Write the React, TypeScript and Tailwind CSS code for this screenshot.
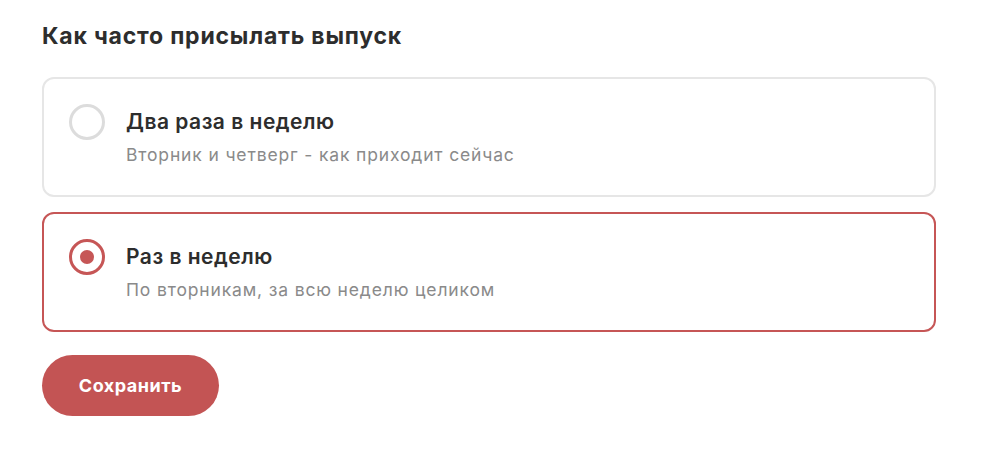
import { useState } from "react"

const options = [
    { id: "twice", title: "Два раза в неделю", note: "Вторник и четверг - как приходит сейчас" },
    { id: "once", title: "Раз в неделю", note: "По вторникам, за всю неделю целиком" },
]

export default function App() {
    const [value, setValue] = useState("once")

    return (
        <div className="min-h-screen bg-white pl-[42px] pt-[22px] font-['Inter',sans-serif] text-[#2d2d2d]">
            <h2 className="text-[23px] font-bold leading-[28px] tracking-[0.8px]">Как часто присылать выпуск</h2>

            <div className="mt-[27px] flex w-[894px] flex-col gap-[15px]">
                {options.map((o) => {
                    const active = value === o.id
                    return (
                        <button
                            key={o.id}
                            onClick={() => setValue(o.id)}
                            className={
                                "flex items-start gap-[21px] rounded-[12px] border-2 bg-white px-[25px] pt-[25px] pb-[28px] text-left " +
                                (active ? "border-[#c65656]" : "border-[#e6e6e6]")
                            }
                        >
                            {/* Radio */}
                            <span
                                className={
                                    "flex h-[36px] w-[36px] shrink-0 items-center justify-center rounded-full border-[3px] " +
                                    (active ? "border-[#c65656]" : "border-[#dcdcdc]")
                                }
                            >
                                {active && <span className="h-[14px] w-[14px] rounded-full bg-[#c65656]" />}
                            </span>

                            <span className="flex flex-col">
                                <span className="flex h-[36px] items-center text-[21px] font-semibold tracking-[0.5px]">{o.title}</span>
                                <span className="mt-[3px] text-[17.5px] leading-6 tracking-[0.85px] text-[#8a8a8a]">{o.note}</span>
                            </span>
                        </button>
                    )
                })}
            </div>

            <button className="mt-[23px] h-[61px] w-[177px] rounded-full bg-[#c35454] text-[18px] font-bold tracking-[0.5px] text-white">
                Сохранить
            </button>
        </div>
    )
}
